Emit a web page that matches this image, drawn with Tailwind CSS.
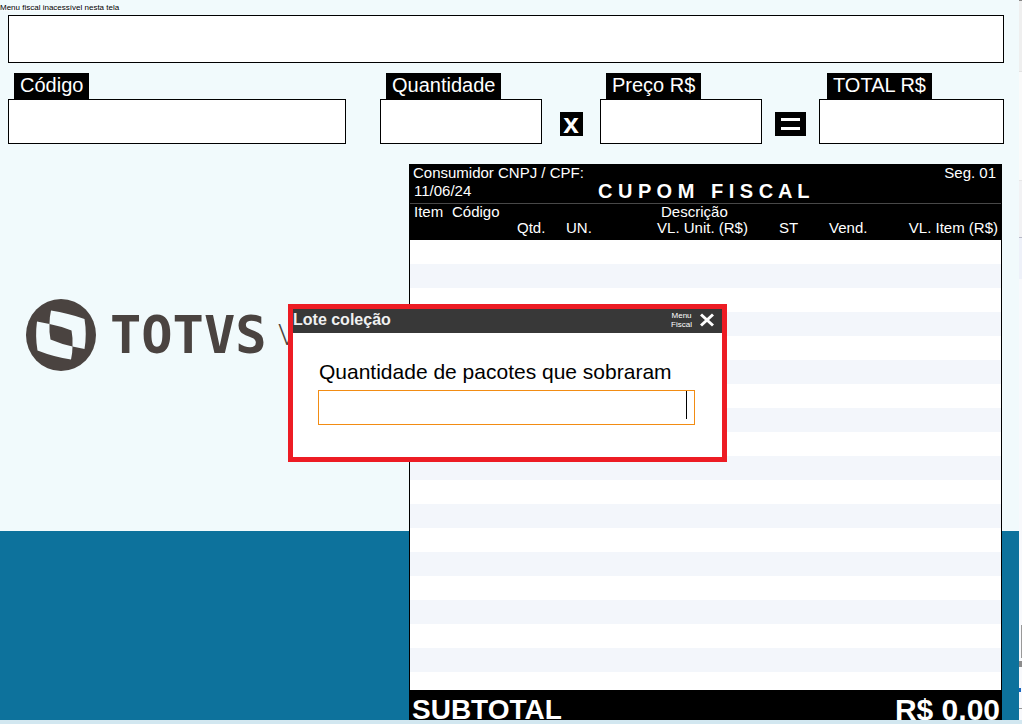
<!DOCTYPE html>
<html lang="pt-BR">
<head>
<meta charset="utf-8">
<title>Cupom Fiscal</title>
<script src="https://cdn.jsdelivr.net/npm/@tailwindcss/browser@4"></script>
</head>
<body class="flex h-screen overflow-hidden bg-[#f8f9fc] font-['Liberation_Sans',Arial,sans-serif] text-black">
<div class="flex min-w-0 flex-1 flex-col">
  <main class="relative flex min-h-0 flex-1 flex-col overflow-hidden bg-[linear-gradient(#f1fafc_531px,#0d729c_531px)]">
    <p class="h-[15px] shrink-0 overflow-hidden pt-1 text-[8px] leading-[8px] whitespace-nowrap [text-shadow:1px_1px_0_#fff]">Menu fiscal inacessível nesta tela</p>

    <form class="shrink-0 pr-[15px] pl-2">
      <input aria-label="Produto" class="block h-12 w-full border border-black bg-white px-2 text-xl outline-none">
      <div class="mt-[10px] flex items-end">
        <div class="min-w-0 flex-1">
          <label for="codigo" class="ml-1.5 block h-[26px] w-fit bg-black px-1.5 text-xl leading-6 text-white">Código</label>
          <input id="codigo" class="block h-[45px] w-full border border-black bg-white px-2 text-xl outline-none">
        </div>
        <div class="ml-[34px] w-[162px]">
          <label for="qtd" class="ml-1.5 block h-[26px] w-fit bg-black px-1.5 text-xl leading-6 text-white">Quantidade</label>
          <input id="qtd" class="block h-[45px] w-full border border-black bg-white px-2 text-xl outline-none">
        </div>
        <div class="flex w-[58px] justify-center pb-2">
          <span class="flex h-6 w-[23px] items-center justify-center bg-black text-[28px] leading-6 font-bold text-white">x</span>
        </div>
        <div class="w-[162px]">
          <label for="preco" class="ml-1.5 block h-[26px] w-fit bg-black px-1.5 text-xl leading-6 text-white">Preço R$</label>
          <input id="preco" class="block h-[45px] w-full border border-black bg-white px-2 text-xl outline-none">
        </div>
        <div class="flex w-[57px] justify-center pb-2">
          <span class="flex h-6 w-[31px] flex-col items-center justify-center gap-1.5 bg-black" role="img" aria-label="igual">
            <span class="h-[3px] w-[19px] bg-white"></span>
            <span class="h-[3px] w-[19px] bg-white"></span>
          </span>
        </div>
        <div class="w-[185px]">
          <label for="total" class="ml-2 block h-[26px] w-fit bg-black px-1.5 text-xl leading-6 text-white">TOTAL R$</label>
          <input id="total" class="block h-[45px] w-full border border-black bg-white px-2 text-xl outline-none">
        </div>
      </div>
    </form>

    <div class="mt-5 flex min-h-0 flex-1 pr-[17px]">
      <div class="flex w-[409px] shrink-0 items-start pt-[135px] pl-[26px] text-[#4a4340]">
        <svg class="h-[72px] w-[70px] shrink-0" viewBox="0 0 70 72" aria-hidden="true">
          <ellipse cx="35" cy="36" rx="35" ry="36" fill="#4a4340"/>
          <path fill="#f1fafc" d="M25 11.500Q42 14 58.500 20Q61 35 58.500 50L46.500 47.500Q47 39 45.500 31.500Q34 27 23.500 25Q23.500 18 25 11.500Z"/>
          <path fill="#f1fafc" d="M11 22.500L23.500 25Q23 33 24.500 40.500Q35 45 46.500 47.500Q46.500 54 45 60.500Q28 58 11.500 51.500Q9 37 11 22.500Z"/>
        </svg>
        <span class="ml-[14px] font-['DejaVu_Sans_Mono',monospace] text-[52px] leading-[72px] font-bold">TOTVS</span>
        <span class="ml-3 font-['Open_Sans',sans-serif] text-[30px] leading-[70px] font-light">V</span>
      </div>

      <section class="flex min-w-0 flex-1 flex-col border-x border-black bg-white">
        <header class="h-10 shrink-0 border-b border-[#484848] bg-black pr-[5px] pl-[3px] text-[15px] text-white">
          <div class="flex h-[18px] justify-between leading-[18px]"><span>Consumidor CNPJ / CPF:</span><span>Seg. 01</span></div>
          <div class="grid h-[21px] grid-cols-[185px_1fr] items-start leading-[18px]"><span class="pl-px">11/06/24</span><h1 class="text-xl leading-[18px] font-bold">C U P O M &nbsp; F I S C A L</h1></div>
        </header>
        <div class="min-h-0 flex-1 overflow-hidden">
          <table class="w-full table-fixed border-collapse text-left text-[15px] leading-4">
            <colgroup><col class="w-[38px]"><col class="w-[65px]"><col class="w-[49px]"><col class="w-[91px]"><col class="w-[122px]"><col class="w-[50px]"><col class="w-[70px]"><col></colgroup>
            <thead class="bg-black text-white [&_th]:p-0 [&_th]:pl-1 [&_th]:font-normal [&_th]:whitespace-nowrap">
              <tr class="h-4"><th>Item</th><th colspan="3">Código</th><th colspan="4"><span class="pl-1">Descrição</span></th></tr>
              <tr class="h-5 align-top"><th></th><th></th><th>Qtd.</th><th>UN.</th><th>VL. Unit. (R$)</th><th>ST</th><th>Vend.</th><th class="pr-[3px]! text-right">VL. Item (R$)</th></tr>
            </thead>
            <tbody class="[&>tr]:h-6 [&>tr:nth-child(even)]:bg-[#f3f6fb]">
              <tr><td colspan="8"></td></tr><tr><td colspan="8"></td></tr><tr><td colspan="8"></td></tr><tr><td colspan="8"></td></tr><tr><td colspan="8"></td></tr>
              <tr><td colspan="8"></td></tr><tr><td colspan="8"></td></tr><tr><td colspan="8"></td></tr><tr><td colspan="8"></td></tr><tr><td colspan="8"></td></tr>
              <tr><td colspan="8"></td></tr><tr><td colspan="8"></td></tr><tr><td colspan="8"></td></tr><tr><td colspan="8"></td></tr><tr><td colspan="8"></td></tr>
              <tr><td colspan="8"></td></tr><tr><td colspan="8"></td></tr><tr><td colspan="8"></td></tr><tr><td colspan="8"></td></tr>
            </tbody>
          </table>
        </div>
        <footer class="flex h-[30px] shrink-0 justify-between overflow-hidden bg-black pt-1 pr-px pl-0.5 leading-8 font-bold text-white">
          <span class="text-[28px]">SUBTOTAL</span><span class="text-[30px]">R$ 0,00</span>
        </footer>
      </section>
    </div>

    <div role="dialog" aria-labelledby="dlg-title" class="absolute top-[304px] left-[288px] w-[439px] border-5 border-[#ed1c24] bg-white">
      <div class="flex h-6 items-start bg-[#383838] pr-2 text-white">
        <h2 id="dlg-title" class="flex-1 text-base leading-[22px] font-bold text-[#f0f0f0]">Lote coleção</h2>
        <button type="button" class="mt-0.5 mr-2 text-center text-[8px] leading-[9px]">Menu<br>Fiscal</button>
        <button type="button" aria-label="Fechar" class="mt-1"><svg class="h-[14px] w-[14px]" viewBox="0 0 14 14" fill="none" stroke="#fff" stroke-width="3"><path d="M1 1.500L13 12.500M13 1.500L1 12.500"/></svg></button>
      </div>
      <div class="px-[25px] pt-[27px] pb-8">
        <label for="pacotes" class="block pl-px text-[21px] leading-6 whitespace-nowrap">Quantidade de pacotes que sobraram</label>
        <div class="relative mt-1.5 w-[377px]">
          <input id="pacotes" class="block h-[35px] w-full border border-[#f28c13] bg-white pr-2 text-right text-2xl outline-none">
          <span class="absolute top-px right-2 h-7 w-px bg-black"></span>
        </div>
      </div>
    </div>
  </main>
  <div class="h-1 shrink-0 bg-[#d2e7f0]"></div>
</div>
<!-- edge of the window behind -->
<div class="flex w-[3px] shrink-0 flex-col bg-[#f8f9fc]" aria-hidden="true">
  <div class="h-px bg-[#888]"></div>
  <div class="h-[70px] bg-[#efefef]"></div>
  <div class="h-px bg-[#e2e2e2]"></div>
  <div class="h-[108px] bg-[#fafafa]"></div>
  <div class="h-[57px] border-t border-[#e6e6e6] bg-[#f2f2f4]"></div>
  <div class="h-px bg-[#b9bac8]"></div>
  <div class="h-[41px] bg-[#eef1f9]"></div>
  <div class="h-[346px]"></div>
  <div class="ml-auto h-[33px] w-px bg-[#999]"></div>
  <div class="mt-[3px] h-1.5 bg-[#8c8c8c]"></div>
  <div class="mt-[21px] h-1 w-[2px] bg-[#1565c0]"></div>
  <div class="mt-4 h-px bg-[#999]"></div>
  <div class="mt-auto h-1 bg-[#d2e7f0]"></div>
</div>
</body>
</html>
